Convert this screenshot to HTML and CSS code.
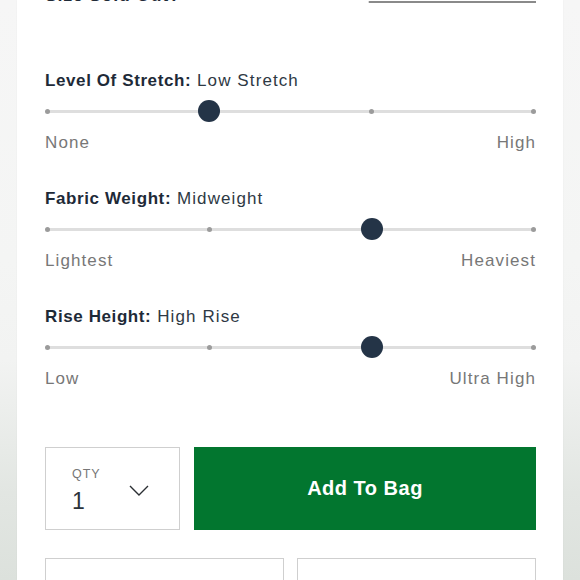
FILE: index.html
```html
<!DOCTYPE html>
<html lang="en">
<head>
<meta charset="utf-8">
<title>Product options</title>
<link rel="stylesheet" href="styles.css">
</head>
<body>
<div class="page">
  <main class="card">
    <div class="top-row">
      <span class="sold">Size Sold Out?</span>
      <a class="notify" href="#">Shop Similar Items</a>
    </div>

    <section class="attr">
      <div class="attr-label"><b>Level Of Stretch:</b> <span>Low Stretch</span></div>
      <div class="slider">
        <span class="dot"></span><span class="dot"></span><span class="dot"></span><span class="dot"></span>
        <span class="thumb" style="--pos:0.3333"></span>
      </div>
      <div class="edges"><span>None</span><span>High</span></div>
    </section>

    <section class="attr">
      <div class="attr-label"><b>Fabric Weight:</b> <span>Midweight</span></div>
      <div class="slider">
        <span class="dot"></span><span class="dot"></span><span class="dot"></span><span class="dot"></span>
        <span class="thumb" style="--pos:0.6667"></span>
      </div>
      <div class="edges"><span>Lightest</span><span>Heaviest</span></div>
    </section>

    <section class="attr">
      <div class="attr-label"><b>Rise Height:</b> <span>High Rise</span></div>
      <div class="slider">
        <span class="dot"></span><span class="dot"></span><span class="dot"></span><span class="dot"></span>
        <span class="thumb" style="--pos:0.6667"></span>
      </div>
      <div class="edges"><span>Low</span><span>Ultra High</span></div>
    </section>

    <div class="actions">
      <div class="qty">
        <div class="qty-text">
          <span class="qty-label">QTY</span>
          <span class="qty-value">1</span>
        </div>
        <svg class="chevron" width="20" height="11" viewBox="0 0 20 11" aria-hidden="true">
          <path d="M1 1 L10 10 L19 1" fill="none" stroke="#2b2f33" stroke-width="1.4"/>
        </svg>
      </div>
      <button class="add-btn" type="button">Add To Bag</button>
    </div>

    <div class="secondary">
      <div class="sec-box"></div>
      <div class="sec-box"></div>
    </div>
  </main>
</div>
</body>
</html>
```

FILE: styles.css
```css
html, body {
  margin: 0;
  padding: 0;
  height: 100%;
  overflow: hidden;
}

body {
  font-family: "Liberation Sans", Arial, sans-serif;
  background: linear-gradient(to bottom, #f6f6f6 0%, #f4f5f4 45%, #f2f3f2 62%, #e2e6e2 85%, #dce1dc 100%);
}

.page {
  display: flex;
  justify-content: center;
  height: 100%;
}

.card {
  width: 546px;
  background: #ffffff;
  box-sizing: border-box;
  padding: 0 27px 0 28px;
  min-height: 100%;
  box-shadow: 0 0 2px rgba(0, 0, 0, 0.04);
}

.top-row {
  display: flex;
  justify-content: space-between;
  align-items: baseline;
  margin-top: -16px;
  line-height: 22px;
}

.sold {
  font-size: 18px;
  font-weight: bold;
  color: #1f2b38;
  letter-spacing: 0.6px;
}

.notify {
  align-self: flex-start;
  font-size: 15px;
  line-height: 16px;
  color: #333;
  letter-spacing: 2.3px;
  text-decoration: underline;
  text-decoration-color: #8a8a8a;
  text-decoration-thickness: 1.5px;
  text-underline-offset: 4px;
}

.attr {
  margin-top: 63px;
}

.attr + .attr {
  margin-top: 32px;
}

.attr-label {
  font-size: 17px;
  line-height: 24px;
  color: #2e3944;
  letter-spacing: 1.1px;
  white-space: nowrap;
}

.attr-label b {
  color: #1e2a38;
  letter-spacing: 0.6px;
}

.slider {
  position: relative;
  height: 22px;
  margin-top: 7px;
  display: flex;
  justify-content: space-between;
  align-items: center;
  background: linear-gradient(#dedede, #dedede) center / calc(100% - 4px) 3px no-repeat;
}

.dot {
  width: 5px;
  height: 5px;
  border-radius: 50%;
  background: #9b9b9b;
}

.thumb {
  position: absolute;
  top: 0;
  left: calc(2.5px + (100% - 5px) * var(--pos));
  width: 22px;
  height: 22px;
  margin-left: -11px;
  border-radius: 50%;
  background: #243447;
}

.edges {
  display: flex;
  justify-content: space-between;
  margin-top: 9px;
  font-size: 17px;
  line-height: 24px;
  color: #777;
  letter-spacing: 1.1px;
}

.actions {
  display: flex;
  gap: 14px;
  height: 83px;
  margin-top: 56px;
}

.qty {
  width: 135px;
  box-sizing: border-box;
  border: 1px solid #cfcfcf;
  display: flex;
  align-items: center;
  justify-content: space-between;
  padding: 4px 30px 0 26px;
}

.qty-text {
  display: flex;
  flex-direction: column;
}

.qty-label {
  font-size: 12.5px;
  line-height: 15px;
  letter-spacing: 1px;
  color: #777;
}

.qty-value {
  margin-top: 6px;
  font-size: 23px;
  line-height: 26px;
  color: #2b323a;
}

.chevron {
  display: block;
}

.add-btn {
  flex: 1;
  border: none;
  margin: 0;
  padding: 0;
  background: #02762f;
  color: #ffffff;
  font-family: "Liberation Sans", Arial, sans-serif;
  font-size: 20px;
  font-weight: bold;
  letter-spacing: 0.5px;
}

.secondary {
  display: flex;
  gap: 13px;
  margin-top: 28px;
}

.sec-box {
  flex: 1;
  height: 80px;
  border: 1px solid #cfcfcf;
}
```
